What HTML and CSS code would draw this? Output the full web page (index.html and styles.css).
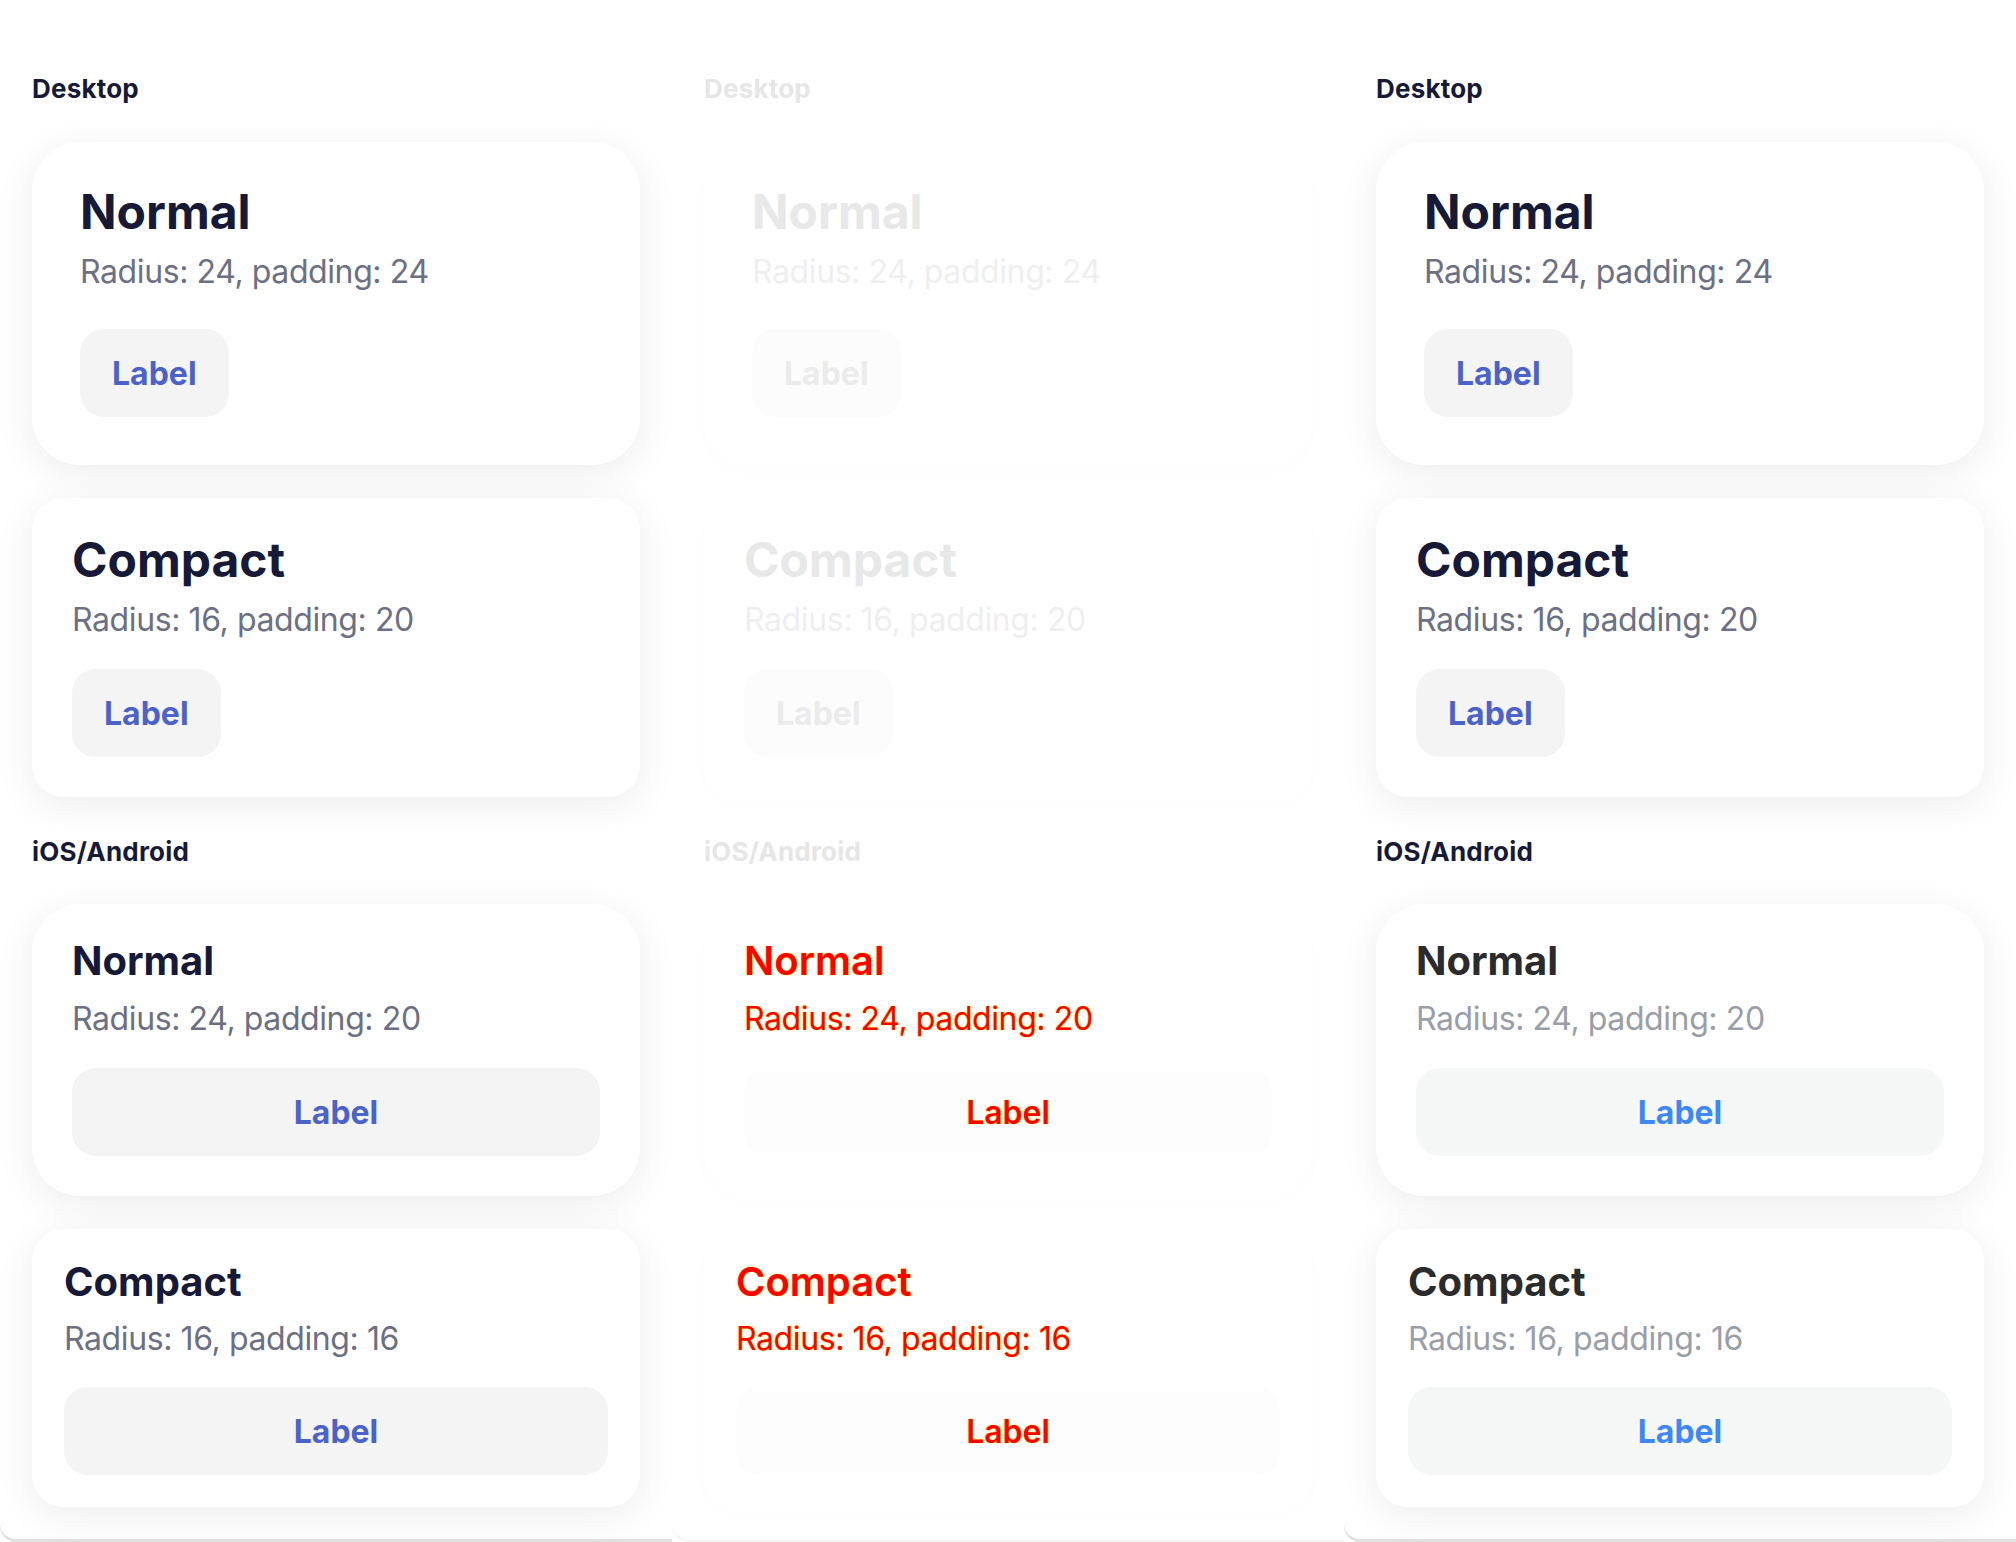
FILE: index.html
```html
<!DOCTYPE html>
<html lang="en">
<head>
<meta charset="utf-8">
<title>Card sizes – visual diff</title>
<link rel="stylesheet" href="styles.css">
</head>
<body>
<main class="board">

  <section class="panel">
    <div class="group">
      <h2 class="group-label">Desktop</h2>
      <div class="card card--desk-normal">
        <h3 class="card-title">Normal</h3>
        <p class="card-sub">Radius: 24, padding: 24</p>
        <button class="btn">Label</button>
      </div>
      <div class="card card--desk-compact">
        <h3 class="card-title">Compact</h3>
        <p class="card-sub">Radius: 16, padding: 20</p>
        <button class="btn">Label</button>
      </div>
    </div>
    <div class="group">
      <h2 class="group-label">iOS/Android</h2>
      <div class="card card--mob-normal">
        <h3 class="card-title">Normal</h3>
        <p class="card-sub">Radius: 24, padding: 20</p>
        <button class="btn btn--block">Label</button>
      </div>
      <div class="card card--mob-compact">
        <h3 class="card-title">Compact</h3>
        <p class="card-sub">Radius: 16, padding: 16</p>
        <button class="btn btn--block">Label</button>
      </div>
    </div>
  </section>

  <section class="panel panel--diff">
    <div class="group group--faded">
      <h2 class="group-label">Desktop</h2>
      <div class="card card--desk-normal">
        <h3 class="card-title">Normal</h3>
        <p class="card-sub">Radius: 24, padding: 24</p>
        <button class="btn">Label</button>
      </div>
      <div class="card card--desk-compact">
        <h3 class="card-title">Compact</h3>
        <p class="card-sub">Radius: 16, padding: 20</p>
        <button class="btn">Label</button>
      </div>
    </div>
    <div class="group group--changed">
      <h2 class="group-label">iOS/Android</h2>
      <div class="card card--mob-normal">
        <h3 class="card-title">Normal</h3>
        <p class="card-sub">Radius: 24, padding: 20</p>
        <button class="btn btn--block">Label</button>
      </div>
      <div class="card card--mob-compact">
        <h3 class="card-title">Compact</h3>
        <p class="card-sub">Radius: 16, padding: 16</p>
        <button class="btn btn--block">Label</button>
      </div>
    </div>
  </section>

  <section class="panel panel--new">
    <div class="group">
      <h2 class="group-label">Desktop</h2>
      <div class="card card--desk-normal">
        <h3 class="card-title">Normal</h3>
        <p class="card-sub">Radius: 24, padding: 24</p>
        <button class="btn">Label</button>
      </div>
      <div class="card card--desk-compact">
        <h3 class="card-title">Compact</h3>
        <p class="card-sub">Radius: 16, padding: 20</p>
        <button class="btn">Label</button>
      </div>
    </div>
    <div class="group group--native">
      <h2 class="group-label">iOS/Android</h2>
      <div class="card card--mob-normal">
        <h3 class="card-title">Normal</h3>
        <p class="card-sub">Radius: 24, padding: 20</p>
        <button class="btn btn--block">Label</button>
      </div>
      <div class="card card--mob-compact">
        <h3 class="card-title">Compact</h3>
        <p class="card-sub">Radius: 16, padding: 16</p>
        <button class="btn btn--block">Label</button>
      </div>
    </div>
  </section>

</main>
</body>
</html>
```

FILE: styles.css
```css
* { box-sizing: border-box; }

html, body {
  margin: 0;
  background: #ffffff;
}

body {
  font-family: Inter, "Noto Sans", "Liberation Sans", sans-serif;
  color: #171a37;
  overflow: hidden;
}

.board {
  display: grid;
  grid-template-columns: repeat(3, 672px);
  height: 1542px;
}

.panel {
  height: 1539px;
  padding: 73px 32px 0;
  background: #ffffff;
  border-bottom-left-radius: 16px;
  box-shadow: 0 3px 0 #e1e1e1;
  display: flex;
  flex-direction: column;
  gap: 38.5px;
}

.panel--diff {
  box-shadow: 0 3px 0 #f6f6f6;
}

.group {
  display: flex;
  flex-direction: column;
  gap: 32.5px;
}

.group-label {
  margin: 0 0 5px;
  font-size: 26px;
  line-height: 31px;
  font-weight: 700;
  letter-spacing: 0.2px;
  color: #171a37;
}

.card {
  background: #ffffff;
  box-shadow: 0 8px 40px rgba(0, 0, 0, 0.075);
  display: flex;
  flex-direction: column;
  align-items: flex-start;
}

.card--desk-normal { border-radius: 48px; padding: 41px 48px 48px; }
.card--desk-compact { border-radius: 32px; padding: 33px 40px 40px; }
.card--mob-normal { border-radius: 48px; padding: 33px 40px 40px; }
.card--mob-compact { border-radius: 32px; padding: 29px 32px 32px; }

.card-title {
  margin: 0;
  font-size: 48px;
  line-height: 57.6px;
  font-weight: 700;
  color: #171a37;
}

.card--mob-normal .card-title,
.card--mob-compact .card-title {
  font-size: 40px;
  line-height: 48px;
}

.card-sub {
  margin: 7.5px 0 0;
  font-size: 32px;
  line-height: 48px;
  font-weight: 400;
  letter-spacing: -0.4px;
  color: #6c7082;
}

.card--mob-normal .card-sub,
.card--mob-compact .card-sub { margin-top: 9.5px; }

.btn {
  margin-top: 33.5px;
  padding: 25px 32px 23px;
  border: 0;
  border-radius: 24px;
  background: #f4f4f5;
  font-family: inherit;
  font-size: 32px;
  line-height: 40px;
  font-weight: 700;
  color: #4b63c8;
}

.card--desk-compact .btn,
.card--mob-normal .btn { margin-top: 25.5px; }
.card--mob-compact .btn { margin-top: 23.5px; }

.btn--block {
  align-self: stretch;
  text-align: center;
}

/* faded (unchanged) region of the diff image */
.group--faded .group-label,
.panel--diff .group--changed .group-label { color: #e6e6e6; }
.group--faded .card,
.group--changed .card { box-shadow: 0 8px 40px rgba(0, 0, 0, 0.012); }
.group--faded .card-title { color: #e8e8e8; }
.group--faded .card-sub { color: #efefef; }
.group--faded .btn { background: #fcfcfc; color: #ebebeb; }

/* changed pixels of the diff image */
.group--changed .card-title,
.group--changed .card-sub,
.group--changed .btn {
  color: #ff0000;
  text-shadow: 0 0 1px #ffee00, 0 0 1px #ffee00;
}
.group--changed .card-title,
.group--changed .btn { font-weight: 600; }
.group--changed .btn { background: #fdfdfd; }

/* native styling in the new screenshot */
.group--native .card-title { color: #2b2b2b; }
.group--native .card-sub { color: #9a9ea7; }
.group--native .btn { background: #f5f7f7; color: #3d87f7; }
```
